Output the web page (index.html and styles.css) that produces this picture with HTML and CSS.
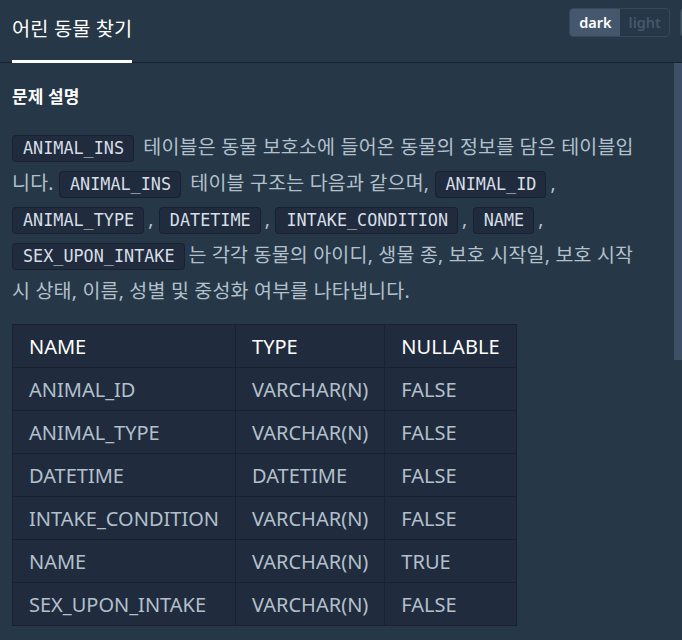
FILE: index.html
```html
<!DOCTYPE html>
<html lang="ko">
<head>
<meta charset="utf-8">
<title>어린 동물 찾기</title>
<link rel="stylesheet" href="styles.css">
</head>
<body>
<div class="app">
  <header class="topbar">
    <nav class="tabs">
      <div class="tab active">어린 동물 찾기</div>
    </nav>
    <div class="tools">
      <div class="theme-toggle">
        <span class="opt on">dark</span>
        <span class="opt">light</span>
      </div>
      <div class="side-btn"></div>
    </div>
  </header>
  <div class="pane">
    <main class="scroller">
      <section class="guide">
        <h6 class="section-title">문제 설명</h6>
        <p class="desc"><code>ANIMAL_INS</code> 테이블은 동물 보호소에 들어온 동물의 정보를 담은 테이블입니다. <code>ANIMAL_INS</code> 테이블 구조는 다음과 같으며, <code>ANIMAL_ID</code>, <code>ANIMAL_TYPE</code>, <code>DATETIME</code>, <code>INTAKE_CONDITION</code>, <code>NAME</code>, <code>SEX_UPON_INTAKE</code>는 각각 동물의 아이디, 생물 종, 보호 시작일, 보호 시작 시 상태, 이름, 성별 및 중성화 여부를 나타냅니다.</p>
        <table class="schema">
          <thead>
            <tr><th>NAME</th><th>TYPE</th><th>NULLABLE</th></tr>
          </thead>
          <tbody>
            <tr><td>ANIMAL_ID</td><td>VARCHAR(N)</td><td>FALSE</td></tr>
            <tr><td>ANIMAL_TYPE</td><td>VARCHAR(N)</td><td>FALSE</td></tr>
            <tr><td>DATETIME</td><td>DATETIME</td><td>FALSE</td></tr>
            <tr><td>INTAKE_CONDITION</td><td>VARCHAR(N)</td><td>FALSE</td></tr>
            <tr><td>NAME</td><td>VARCHAR(N)</td><td>TRUE</td></tr>
            <tr><td>SEX_UPON_INTAKE</td><td>VARCHAR(N)</td><td>FALSE</td></tr>
          </tbody>
        </table>
        <p class="desc">동물 보호소에 들어온 동물 중 젊은 동물의 아이디와 이름을 조회하는 SQL 문을 작성해주세요. 이때 결과는 아이디 순으로 조회해주세요.</p>
        <h6 class="section-title">예시</h6>
        <p class="desc">예를 들어 <code>ANIMAL_INS</code> 테이블이 다음과 같다면</p>
        <table class="schema">
          <thead>
            <tr><th>ANIMAL_ID</th><th>NAME</th><th>INTAKE_CONDITION</th></tr>
          </thead>
          <tbody>
            <tr><td>A365172</td><td>Diablo</td><td>Normal</td></tr>
            <tr><td>A367012</td><td>Miller</td><td>Sick</td></tr>
            <tr><td>A381217</td><td>Cherokee</td><td>Sick</td></tr>
          </tbody>
        </table>
      </section>
    </main>
    <div class="scroll-thumb"></div>
  </div>
</div>
</body>
</html>
```

FILE: styles.css
```css
* { box-sizing: border-box; }
html, body { margin: 0; padding: 0; }
body {
  background: #263747;
  font-family: "Noto Sans", "Noto Sans CJK KR", sans-serif;
  color: #b2c0cc;
  overflow: hidden;
}
.app {
  display: flex;
  flex-direction: column;
  height: 640px;
  width: 682px;
  overflow: hidden;
}
.topbar {
  flex: 0 0 63px;
  display: flex;
  align-items: flex-start;
  box-shadow: inset 0 -1px 0 #172130;
  padding-left: 12px;
}
.tabs { display: flex; }
.tab {
  height: 63px;
  display: flex;
  align-items: center;
  padding-bottom: 6px;
  font-family: "Noto Sans CJK KR", sans-serif;
  font-size: 19.8px;
  color: #ffffff;
  border-bottom: 3px solid transparent;
}
.tab.active { border-bottom-color: #ffffff; }
.tools {
  margin-left: auto;
  margin-right: -30px;
  margin-top: 8px;
  display: flex;
  gap: 10px;
}
.theme-toggle {
  display: flex;
  height: 29px;
  border: 1px solid #37485c;
  border-radius: 4px;
  overflow: hidden;
}
.opt {
  display: flex;
  align-items: center;
  padding: 0 8px 1px 9px;
  font-size: 14.5px;
  font-weight: 600;
  color: #44576c;
}
.opt.on {
  background: #44576c;
  color: #ffffff;
}
.side-btn {
  width: 32px;
  height: 29px;
  border: 1px solid #37485c;
  border-radius: 4px;
  background: #44576c;
}
.pane {
  flex: 1 1 auto;
  min-height: 0;
  position: relative;
  display: flex;
}
.scroller {
  flex: 1 1 auto;
  min-height: 0;
  overflow-y: auto;
  scrollbar-width: none;
}
.scroller::-webkit-scrollbar { display: none; }
.scroll-thumb {
  position: absolute;
  top: 0;
  right: 0;
  width: 8px;
  height: 297px;
  background: #3e5066;
}
.guide {
  padding: 20px 34px 60px 12px;
}
.section-title {
  margin: 0 0 20px;
  font-family: "Noto Sans CJK KR", sans-serif;
  font-size: 17px;
  font-weight: 700;
  line-height: 26px;
  color: #ffffff;
}
.desc {
  margin: 0 0 15px;
  font-size: 19.5px;
  letter-spacing: 0.2px;
  line-height: 36px;
}
.desc + .section-title { margin-top: 40px; }
code {
  font-family: "DejaVu Sans Mono", monospace;
  font-size: 16.8px;
  letter-spacing: 0;
  line-height: 20px;
  color: #d6dee6;
  background: #202b3d;
  border: 1px solid #172130;
  border-radius: 4px;
  padding: 2px 9px 3px 10px;
  margin-right: 4px;
}
.schema {
  border-collapse: collapse;
  background: #202b3d;
  font-size: 20px;
  margin-bottom: 40px;
}
.schema th, .schema td {
  height: 43px;
  padding: 0 16px;
  border: 1px solid #172130;
  text-align: left;
  white-space: nowrap;
}
.schema th {
  font-weight: 400;
  color: #ffffff;
}
.schema td { color: #b2c0cc; }
```
